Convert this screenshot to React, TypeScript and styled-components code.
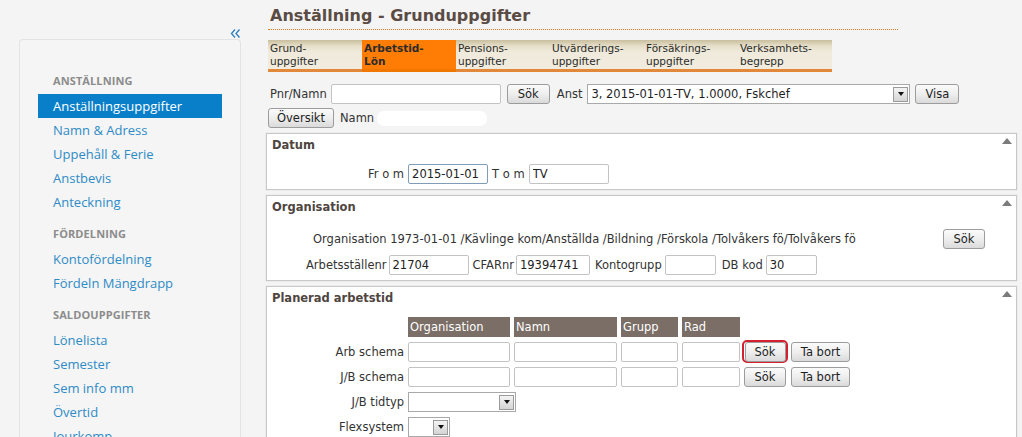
import React from "react";
import styled, { createGlobalStyle } from "styled-components";

const Global = createGlobalStyle`
  html, body { margin: 0; padding: 0; background: #f4f4f4; }
  body { overflow: hidden; }
  * { box-sizing: border-box; }
`;

const Page = styled.div`
  display: flex;
  width: 1022px;
  height: 437px;
  overflow: hidden;
  background: #f4f4f4;
`;

/* ---------- Sidebar ---------- */
const Sidebar = styled.aside`
  width: 266px;
  flex-shrink: 0;
  display: flex;
  flex-direction: column;
`;

const CollapseRow = styled.div`
  height: 41px;
  display: flex;
  justify-content: flex-end;
  align-items: flex-start;
  padding: 28px 25px 0 0;
`;

const Panel = styled.nav`
  margin-left: 19px;
  width: 222px;
  flex: 1;
  background: #f5f5f5;
  border: 1px solid #e3e3e3;
  border-bottom: none;
  border-radius: 4px 4px 0 0;
  padding: 33px 18px 0;
  font-family: "Open Sans", "Noto Sans", sans-serif;
`;

const NavHeading = styled.div<{ $first?: boolean }>`
  height: 16px;
  line-height: 16px;
  margin-top: ${(p) => (p.$first ? 0 : 12)}px;
  margin-bottom: 5px;
  padding-left: 15px;
  font-size: 11px;
  font-weight: 700;
  color: #8c8c8c;
  letter-spacing: 0.1px;
`;

const NavItem = styled.div<{ $active?: boolean }>`
  height: 24px;
  line-height: 24px;
  padding-left: 15px;
  font-size: 13px;
  color: ${(p) => (p.$active ? "#ffffff" : "#2e8bc6")};
  background: ${(p) => (p.$active ? "#0a7fc9" : "transparent")};
  white-space: nowrap;
`;

/* ---------- Main ---------- */
const Main = styled.main`
  width: 751px;
  display: flex;
  flex-direction: column;
  font-family: "DejaVu Sans", Verdana, sans-serif;
  font-size: 11.5px;
  color: #333;
`;

const Title = styled.h1`
  margin: 0 0 0 2px;
  width: 630px;
  padding: 5px 0 2px 2px;
  font-size: 16px;
  line-height: 22px;
  font-weight: 700;
  color: #5a4b44;
  border-bottom: 1px dotted #e07a25;
`;

const Tabs = styled.div`
  display: flex;
  margin: 10px 0 0 2px;
`;

const Tab = styled.div<{ $active?: boolean }>`
  width: 94px;
  height: 32px;
  padding: 2px 2px 0;
  font-size: 10.5px;
  line-height: 13px;
  font-weight: ${(p) => (p.$active ? 700 : 400)};
  color: #2b2b2b;
  border-bottom: 3px solid ${(p) => (p.$active ? "#f07800" : "#e2883a")};
  background: ${(p) =>
    p.$active
      ? "#ff7d05"
      : "linear-gradient(to bottom, #c9bf9f 0px, #e6dfc9 6px, #efeadb 12px, #f1ecde 100%)"};
`;

const Row = styled.div<{ $top: number; $left?: number }>`
  display: flex;
  align-items: center;
  height: 20px;
  margin-top: ${(p) => p.$top}px;
  padding-left: ${(p) => p.$left ?? 0}px;
`;

const Label = styled.span<{ $ml?: number; $mr?: number }>`
  margin-left: ${(p) => p.$ml ?? 0}px;
  margin-right: ${(p) => p.$mr ?? 4}px;
  white-space: nowrap;
  color: #333;
`;

const Input = styled.input<{ $w: number; $focus?: boolean; $ml?: number }>`
  width: ${(p) => p.$w}px;
  height: 20px;
  margin: 0 0 0 ${(p) => p.$ml ?? 0}px;
  padding: 0 3px;
  border: 1px solid ${(p) => (p.$focus ? "#7f9db9" : "#c3c3c3")};
  border-radius: 2px;
  background: #fff;
  font-family: "DejaVu Sans", Verdana, sans-serif;
  font-size: 11.5px;
  color: #222;
  outline: none;
  flex-shrink: 0;
`;

const Button = styled.button<{ $w: number; $ml?: number }>`
  width: ${(p) => p.$w}px;
  height: 20px;
  margin: 0 0 0 ${(p) => p.$ml ?? 0}px;
  padding: 0;
  border: 1px solid #9c9c9c;
  border-radius: 3px;
  background: linear-gradient(to bottom, #fbfbfb 0%, #eeeeee 50%, #dadada 100%);
  font-family: "DejaVu Sans", Verdana, sans-serif;
  font-size: 11.5px;
  color: #1e1e1e;
  flex-shrink: 0;
`;

const Highlight = styled.div`
  display: flex;
  align-items: center;
  justify-content: center;
  width: 46px;
  height: 23px;
  margin: -2px 0 -1px -2px;
  border: 2px solid #d4202f;
  border-radius: 5px;
`;

const SelectBox = styled.div<{ $w: number; $ml?: number }>`
  display: flex;
  align-items: center;
  justify-content: space-between;
  width: ${(p) => p.$w}px;
  height: 20px;
  margin-left: ${(p) => p.$ml ?? 0}px;
  padding: 0 1px 0 3px;
  border: 1px solid #a9a9a9;
  background: #fff;
  font-size: 11.5px;
  color: #1e1e1e;
  white-space: nowrap;
`;

const SelectArrow = styled.span`
  display: flex;
  align-items: center;
  justify-content: center;
  width: 15px;
  height: 15px;
  border: 1px solid #9a9a9a;
  background: linear-gradient(to bottom, #f4f4f4, #d4d4d4);
  &::after {
    content: "";
    border-left: 3.5px solid transparent;
    border-right: 3.5px solid transparent;
    border-top: 4px solid #111;
  }
`;

const NameField = styled.span`
  display: inline-block;
  width: 110px;
  height: 15px;
  margin-left: 3px;
  background: #fff;
  border-radius: 7px;
`;

/* ---------- Sections ---------- */
const Section = styled.section<{ $h?: number }>`
  margin-top: 5px;
  background: #fff;
  border: 1px solid #c8c8c8;
  box-shadow: 0 0 0 1px #ececec;
  padding-bottom: 5px;
  ${(p) => (p.$h ? `height: ${p.$h}px;` : "")}
`;

const SectionHeader = styled.div`
  display: flex;
  justify-content: space-between;
  height: 22px;
  padding: 0 4px 0 5px;
  line-height: 22px;
  font-weight: 700;
  font-size: 11.5px;
  color: #4f4540;
`;

const Collapse = styled.span`
  margin-top: 4px;
  width: 0;
  height: 0;
  border-left: 5px solid transparent;
  border-right: 5px solid transparent;
  border-bottom: 6px solid #7b7b7b;
`;

const OrgRow = styled.div`
  display: flex;
  align-items: center;
  height: 20px;
  margin-top: 11px;
  padding: 0 31px 0 46px;
`;

const Spacer = styled.div`
  flex: 1;
`;

const Grid = styled.div`
  display: grid;
  grid-template-columns: 137px 102px 103px 57px 58px auto;
  grid-auto-rows: 20px;
  column-gap: 4px;
  row-gap: 5px;
  margin-top: 8px;
  align-items: center;
`;

const HeadCell = styled.div`
  height: 20px;
  line-height: 20px;
  padding-left: 2px;
  background: #7a6e66;
  color: #fff;
  font-size: 11.5px;
`;

const RowLabel = styled.div`
  text-align: right;
  white-space: nowrap;
`;

const ButtonCell = styled.div`
  display: flex;
  align-items: center;
  height: 20px;
`;

const FullCell = styled.div`
  grid-column: 2 / span 5;
  display: flex;
`;

const CollapseIcon = () => (
  <svg width="11" height="11" viewBox="0 0 11 11">
    <path d="M5 1.5 L1.5 5.5 L5 9.5 M9.5 1.5 L6 5.5 L9.5 9.5" fill="none" stroke="#2a7dc0" strokeWidth="1.3" />
  </svg>
);

const nav: { h: string; items: string[] }[] = [
  { h: "ANSTÄLLNING", items: ["Anställningsuppgifter", "Namn & Adress", "Uppehåll & Ferie", "Anstbevis", "Anteckning"] },
  { h: "FÖRDELNING", items: ["Kontofördelning", "Fördeln Mängdrapp"] },
  { h: "SALDOUPPGIFTER", items: ["Lönelista", "Semester", "Sem info mm", "Övertid", "Jourkomp"] },
];

const tabs = [
  ["Grund-", "uppgifter"],
  ["Arbetstid-", "Lön"],
  ["Pensions-", "uppgifter"],
  ["Utvärderings-", "uppgifter"],
  ["Försäkrings-", "uppgifter"],
  ["Verksamhets-", "begrepp"],
];

export default function App() {
  return (
    <Page>
      <Global />
      <Sidebar>
        <CollapseRow>
          <CollapseIcon />
        </CollapseRow>
        <Panel>
          {nav.map((g, gi) => (
            <React.Fragment key={g.h}>
              <NavHeading $first={gi === 0}>{g.h}</NavHeading>
              {g.items.map((it) => (
                <NavItem key={it} $active={it === "Anställningsuppgifter"}>
                  {it}
                </NavItem>
              ))}
            </React.Fragment>
          ))}
        </Panel>
      </Sidebar>

      <Main>
        <Title>Anställning - Grunduppgifter</Title>
        <Tabs>
          {tabs.map((t, i) => (
            <Tab key={t[0]} $active={i === 1}>
              {t[0]}
              <br />
              {t[1]}
            </Tab>
          ))}
        </Tabs>

        <Row $top={12} $left={4}>
          <Label $mr={4}>Pnr/Namn</Label>
          <Input $w={170} defaultValue="" />
          <Button $w={43} $ml={6}>Sök</Button>
          <Label $ml={7} $mr={5}>Anst</Label>
          <SelectBox $w={323}>
            <span>3, 2015-01-01-TV, 1.0000, Fskchef</span>
            <SelectArrow />
          </SelectBox>
          <Button $w={44} $ml={5}>Visa</Button>
        </Row>

        <Row $top={4} $left={2}>
          <Button $w={66}>Översikt</Button>
          <Label $ml={6} $mr={0}>Namn</Label>
          <NameField />
        </Row>

        <Section>
          <SectionHeader>
            <span>Datum</span>
            <Collapse />
          </SectionHeader>
          <Row $top={8} $left={101}>
            <Label>Fr o m</Label>
            <Input $w={80} $focus defaultValue="2015-01-01" />
            <Label $ml={4}>T o m</Label>
            <Input $w={80} defaultValue="TV" />
          </Row>
        </Section>

        <Section>
          <SectionHeader>
            <span>Organisation</span>
            <Collapse />
          </SectionHeader>
          <OrgRow>
            <span>Organisation 1973-01-01 /Kävlinge kom/Anställda /Bildning /Förskola /Tolvåkers fö/Tolvåkers fö</span>
            <Spacer />
            <Button $w={42}>Sök</Button>
          </OrgRow>
          <Row $top={6} $left={39}>
            <Label $mr={2}>Arbetsställenr</Label>
            <Input $w={80} defaultValue="21704" />
            <Label $ml={4} $mr={2}>CFARnr</Label>
            <Input $w={74} defaultValue="19394741" />
            <Label $ml={5} $mr={3}>Kontogrupp</Label>
            <Input $w={51} defaultValue="" />
            <Label $ml={6} $mr={3}>DB kod</Label>
            <Input $w={51} defaultValue="30" />
          </Row>
        </Section>

        <Section $h={160}>
          <SectionHeader>
            <span>Planerad arbetstid</span>
            <Collapse />
          </SectionHeader>
          <Grid>
            <span />
            <HeadCell>Organisation</HeadCell>
            <HeadCell>Namn</HeadCell>
            <HeadCell>Grupp</HeadCell>
            <HeadCell>Rad</HeadCell>
            <span />

            <RowLabel>Arb schema</RowLabel>
            <Input $w={102} defaultValue="" />
            <Input $w={103} defaultValue="" />
            <Input $w={57} defaultValue="" />
            <Input $w={58} defaultValue="" />
            <ButtonCell>
              <Highlight>
                <Button $w={41}>Sök</Button>
              </Highlight>
              <Button $w={59} $ml={3}>Ta bort</Button>
            </ButtonCell>

            <RowLabel>J/B schema</RowLabel>
            <Input $w={102} defaultValue="" />
            <Input $w={103} defaultValue="" />
            <Input $w={57} defaultValue="" />
            <Input $w={58} defaultValue="" />
            <ButtonCell>
              <Button $w={42}>Sök</Button>
              <Button $w={59} $ml={5}>Ta bort</Button>
            </ButtonCell>

            <RowLabel>J/B tidtyp</RowLabel>
            <FullCell>
              <SelectBox $w={108}>
                <span />
                <SelectArrow />
              </SelectBox>
            </FullCell>

            <RowLabel>Flexsystem</RowLabel>
            <FullCell>
              <SelectBox $w={42}>
                <span />
                <SelectArrow />
              </SelectBox>
            </FullCell>
          </Grid>
        </Section>
      </Main>
    </Page>
  );
}
